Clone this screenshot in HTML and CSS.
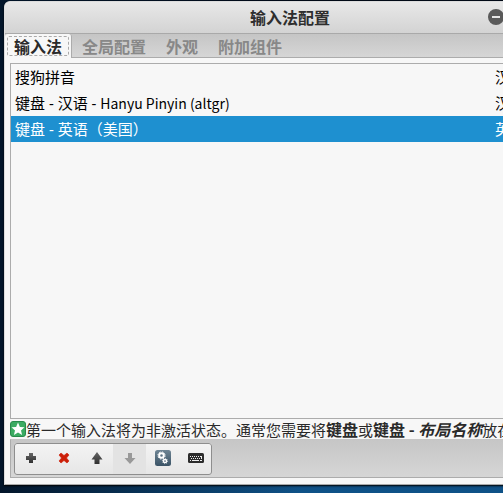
FILE: index.html
```
<!DOCTYPE html>
<html lang="zh-CN">
<head>
<meta charset="utf-8">
<title>输入法配置</title>
<link rel="stylesheet" href="styles.css">
</head>
<body>
<main class="window">
  <header class="titlebar">
    <h1>输入法配置</h1>
    <button class="minimize" type="button" aria-label="最小化">
      <svg width="16" height="16" viewBox="0 0 16 16"><circle cx="8" cy="8" r="8" fill="#5a5a5a"/><path d="M4 7h8v2H4z" fill="#e6e6e6"/></svg>
    </button>
  </header>
  <div class="tabs" role="tablist">
    <button class="tab active" type="button" role="tab" aria-selected="true"><span>输入法</span></button>
    <button class="tab" type="button" role="tab" aria-selected="false"><span>全局配置</span></button>
    <button class="tab" type="button" role="tab" aria-selected="false"><span>外观</span></button>
    <button class="tab" type="button" role="tab" aria-selected="false"><span>附加组件</span></button>
  </div>
  <section class="page">
    <div class="list">
      <table>
        <tbody>
          <tr><td>搜狗拼音</td><td class="language">汉语</td></tr>
          <tr><td>键盘 - 汉语 - <span class="latin">Hanyu Pinyin (altgr)</span></td><td class="language">汉语</td></tr>
          <tr class="selected"><td>键盘 - 英语<span class="paren" lang="zh-TW">（</span>美国<span class="paren" lang="zh-TW">）</span></td><td class="language">英语</td></tr>
        </tbody>
      </table>
    </div>
    <p class="note">
      <svg width="16" height="16" viewBox="0 0 16 16"><rect x=".5" y=".5" width="15" height="15" rx="2.5" fill="#3bab62" stroke="#288a4b"/><path d="M8 1.500l1.900 4.400 4.600.4-3.500 3.100 1.100 4.600L8 11.600l-4.100 2.400 1.100-4.600-3.500-3.100 4.600-.4z" fill="#fff"/></svg>
      <span>第一个输入法将为非激活状态。通常您需要将<b>键盘</b>或<b>键盘 - <i>布局名称</i></b>放在</span>
    </p>
    <div class="toolbar">
      <div class="tools">
        <button type="button" aria-label="添加"><svg width="16" height="16" viewBox="0 0 16 16"><path d="M6 3h4v3h3v4h-3v3H6v-3H3V6h3z" fill="url(#dark)"/></svg></button>
        <button type="button" aria-label="删除"><svg width="16" height="16" viewBox="0 0 16 16"><path d="M5 3l3 2.500L11 3l2 2-2.500 3 2.500 3-2 2-3-2.500L5 13l-2-2 2.500-3L3 5z" fill="#cc1f08" stroke="#cc1f08" stroke-width=".6"/></svg></button>
        <button type="button" aria-label="上移"><svg width="16" height="16" viewBox="0 0 16 16"><path d="M8 2l5.500 7.500H10.500V14h-5V9.500H2.500z" fill="url(#dark)"/></svg></button>
        <button type="button" aria-label="下移" disabled><svg width="16" height="16" viewBox="0 0 16 16"><path d="M8 14L2.500 8H6V3h4v5h3.500z" fill="#999"/></svg></button>
        <button type="button" aria-label="配置"><svg width="16" height="16" viewBox="0 0 16 16"><rect width="16" height="16" rx="2.500" fill="url(#blue)"/><circle cx="6.500" cy="5.500" r="2.300" fill="none" stroke="#fff" stroke-width="2"/><circle cx="6.500" cy="5.500" r="3.600" fill="none" stroke="#fff" stroke-dasharray="1.500 1.330"/><circle cx="10" cy="11" r="1.600" fill="none" stroke="#fff" stroke-width="1.500"/><circle cx="10" cy="11" r="2.600" fill="none" stroke="#fff" stroke-width=".7" stroke-dasharray="1 1"/></svg></button>
        <button type="button" aria-label="键盘布局"><svg width="16" height="16" viewBox="0 0 16 16"><rect y="3" width="16" height="10" rx="1.500" fill="#2c2c2c"/><path d="M2 6h1v1H2zM4 6h1v1H4zM6 6h1v1H6zM8 6h1v1H8zM10 6h1v1h-1zM12 6h2v1h-2zM3 8h1v1H3zM5 8h1v1H5zM7 8h1v1H7zM9 8h1v1H9zM11 8h1v1h-1zM13 7h1v2h-1zM2 10h1v1H2zM4 10h7v1H4zM12 10h2v1h-2z" fill="#eee"/></svg></button>
      </div>
    </div>
  </section>
</main>
<svg class="defs" width="0" height="0" aria-hidden="true">
  <defs>
    <linearGradient id="dark" x1="0" y1="0" x2="0" y2="1"><stop offset="0" stop-color="#666"/><stop offset="1" stop-color="#303030"/></linearGradient>
    <linearGradient id="blue" x1="0" y1="0" x2="0" y2="1"><stop offset="0" stop-color="#6f8594"/><stop offset="1" stop-color="#3a5366"/></linearGradient>
  </defs>
</svg>
</body>
</html>
```
FILE: styles.css
```
* {
  box-sizing: border-box;
}

body {
  margin: 0;
  height: 100vh;
  display: flex;
  overflow: hidden;
  background:
    linear-gradient(90deg, #02152a 0, transparent 60%),
    linear-gradient(#020a18 0, #020c1c 50%, #0f5288 100%);
  color: #1a1a1a;
  font: 15px/20px "Noto Sans CJK SC", sans-serif;
  white-space: nowrap;
}

button {
  margin: 0;
  padding: 0;
  border: 0;
  background: none;
  color: inherit;
  font: inherit;
}

svg {
  display: block;
  flex: none;
}

/* The window runs past the right edge of the screen. */
.window {
  flex: 1 0 auto;
  width: calc(100% + 69px);
  margin: 1px 0 8px 4px;
  display: flex;
  flex-direction: column;
  overflow: hidden;
  border: 1px solid #dcdcdc;
  border-bottom-color: #aaa;
  border-radius: 6px 6px 0 0;
  background: #f7f7f7;
  box-shadow: 0 1px 2px #000;
}

.titlebar {
  height: 32px;
  padding-bottom: 2px;
  display: grid;
  grid-template-columns: 1fr auto 1fr;
  align-items: center;
  border-bottom: 1px solid #a9a9a9;
  background: linear-gradient(#e8e8e8, #d3d3d3);
}

.titlebar h1 {
  grid-column: 2;
  margin: 0;
  font-size: 16px;
  line-height: 20px;
  color: #2e2e2e;
}

.minimize {
  justify-self: end;
  margin-right: 71px;
}

.tabs {
  height: 24px;
  display: flex;
  border-bottom: 1px solid #acacac;
  background: linear-gradient(#c5c5c5, #d6d6d6);
  color: #888;
  font-size: 16px;
  font-weight: bold;
}

.tab {
  padding: 0 10px;
}

.tab.active {
  height: 24px;
  padding: 2px;
  border-right: 1px solid #acacac;
  border-radius: 3px 3px 0 0;
  background: #f7f7f7;
  color: #2a2a2a;
}

.tab.active span {
  display: block;
  padding: 0 6px;
  border: 1px dashed #aaa;
  border-radius: 2px;
  line-height: 18px;
}

.page {
  flex: 1;
  min-height: 0;
  padding: 5px 5px 6px;
  display: flex;
  flex-direction: column;
}

.list {
  flex: 1;
  min-height: 0;
  border: 1px solid #acacac;
}

.list table {
  width: 100%;
  border-spacing: 0;
  font-family: "Noto Sans", "Noto Sans CJK SC", sans-serif;
}

.list td {
  height: 26px;
  padding: 0 4px;
  color: #000;
}

.list .language {
  width: 78px;
}

.list .selected td {
  background: #1e90d0;
  color: #fff;
}

.latin {
  font-family: "Noto Sans CJK SC", sans-serif;
  font-size: 14px;
}

/* Full-width brackets centred in their cell. */
.paren {
  font-family: "Noto Sans CJK TC", sans-serif;
}

.note {
  height: 20px;
  margin: 0;
  display: flex;
  align-items: center;
  color: #2a2a2a;
}

.note b {
  font-size: 16px;
}

.toolbar {
  height: 39px;
  padding: 3px;
  border: 1px solid #acacac;
  border-top-color: #c6c6c6;
  background: linear-gradient(#c6c6c6, #d6d6d6);
}

.tools {
  width: max-content;
  height: 32px;
  display: flex;
  outline: 1px solid #8e8e8e;
  outline-offset: -1px;
  border-radius: 3px;
  background: linear-gradient(#f4f4f4, #e6e6e6);
}

.tools button {
  width: 33px;
  padding-bottom: 2px;
  display: flex;
  align-items: center;
  justify-content: center;
}

.tools button:disabled {
  background: #e3e3e3;
}

.defs {
  position: absolute;
}
```
